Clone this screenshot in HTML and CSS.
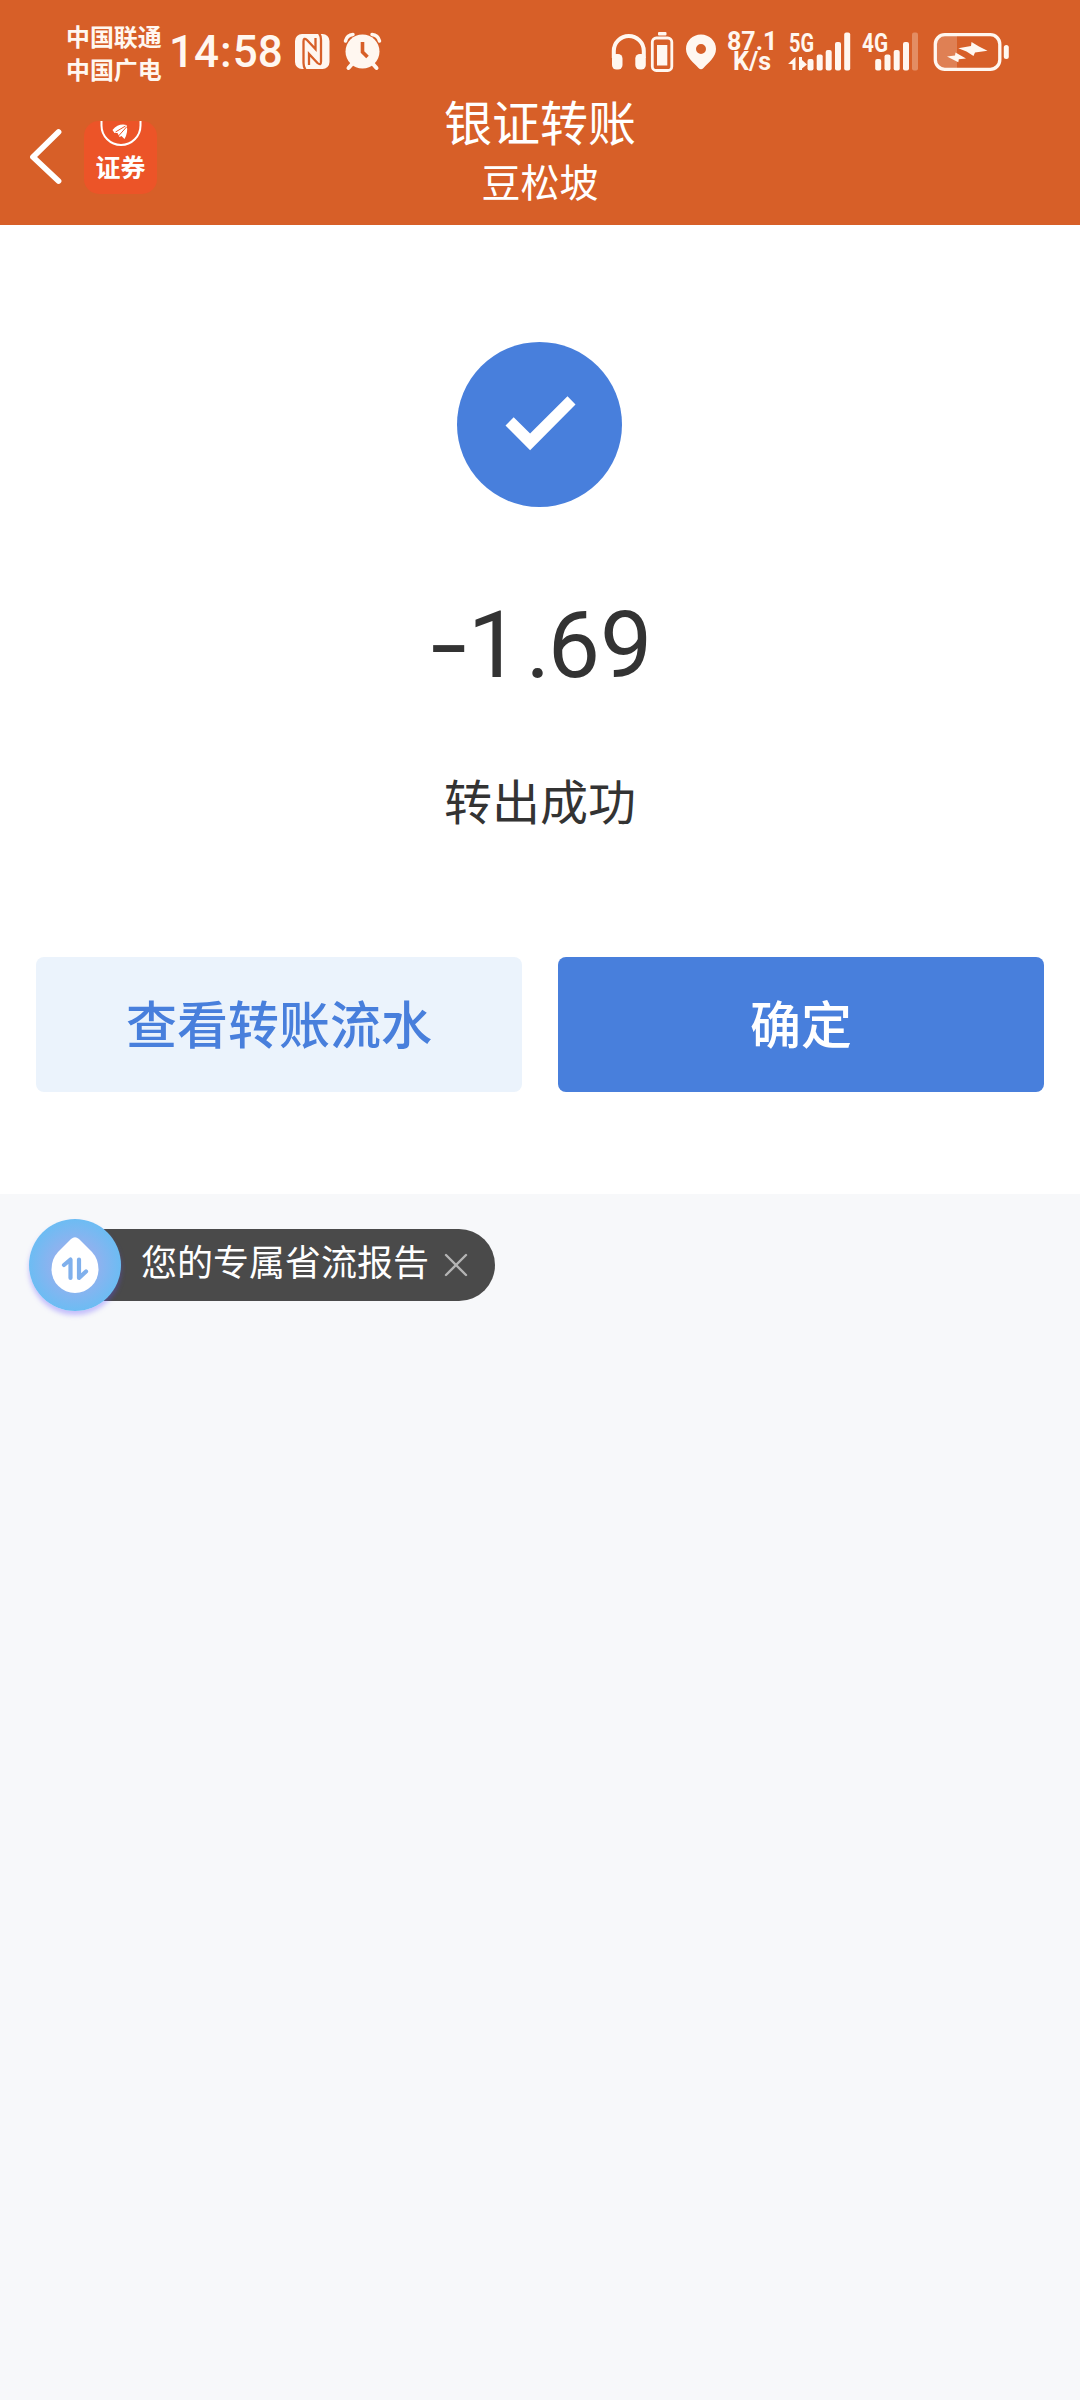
FILE: index.html
```html
<!DOCTYPE html>
<html lang="zh-CN">
<head>
  <meta charset="UTF-8">
  <meta name="viewport" content="width=device-width, initial-scale=1">
  <title>银证转账</title>
  <link rel="stylesheet" href="styles.css">
</head>
<body>
  <header class="header">
    <div class="status-bar">
      <div class="carriers">
        <div>中国联通</div>
        <div>中国广电</div>
      </div>
      <div class="clock">14<span class="colon">:</span>58</div>
      <svg class="nfc" width="35" height="36" viewBox="295 34 35 36">
        <rect x="295" y="34" width="34.500" height="35" rx="7" fill="#fff7f0"/>
        <path d="M305.500 70Q303.500 67 303.500 63V41.500Q303.500 37 307 40L315.500 49V38M319 33Q321 36 321 40V61.500Q321 66 317.500 63L309 54V65" fill="none" stroke="#d75f28" stroke-width="2.300"/>
      </svg>
      <svg class="alarm" width="38" height="38" viewBox="344 33 38 38" fill="none" stroke="#fff7f0">
        <circle cx="362.500" cy="51.500" r="17" fill="#fff7f0" stroke="none"/>
        <path d="M345.500 41Q347 35 353 34.500M372 34.500Q378 35 379.500 41" stroke-width="3.500" stroke-linecap="round"/>
        <path d="M352 64L348.500 68M373 64L376.500 68" stroke-width="4" stroke-linecap="round"/>
        <path d="M362.500 42V52L367.500 57" stroke="#d75f28" stroke-width="3.600"/>
      </svg>

      <div class="status-right">
        <svg width="63" height="42" viewBox="611 31 63 42" fill="#fff7f0">
          <path d="M613.800 58V51A15 15 0 0 1 643.800 51V58" fill="none" stroke="#fff7f0" stroke-width="4"/>
          <rect x="612" y="54" width="10.500" height="15.500" rx="4.500"/>
          <rect x="635.300" y="54" width="10.500" height="15.500" rx="4.500"/>
          <rect x="658" y="32" width="8.500" height="3.500" rx="1"/>
          <rect x="652.300" y="38" width="19.500" height="32.500" rx="4" fill="none" stroke="#fff7f0" stroke-width="2.800"/>
          <rect x="657" y="45" width="10.300" height="20.500"/>
        </svg>
        <svg class="pin" width="31" height="36" viewBox="686 33 31 36">
          <path d="M701 33.500C709.500 33.500 716 40 716 48C716 56 708 62 703.500 67Q701 69.500 698.500 67C694 62 686 56 686 48C686 40 692.500 33.500 701 33.500ZM701 43A5 5 0 1 0 701 53A5 5 0 1 0 701 43Z" fill="#fff7f0" fill-rule="evenodd"/>
        </svg>
        <div class="speed">
          <div>87.1</div>
          <div>K/s</div>
        </div>
        <svg class="signal-5g" width="63" height="40" viewBox="788 31 63 40" fill="#fff7f0">
          <text x="789" y="50.500" textLength="25" lengthAdjust="spacingAndGlyphs">5G</text>
          <path d="M792.500 69V63H788L795.500 56V69ZM799 56H802V59L807 63.500L802 67.500V69H799Z"/>
          <rect x="807.500" y="58" width="6" height="11.500" rx="2"/>
          <rect x="816.700" y="53.500" width="6" height="16" rx="2"/>
          <rect x="825.700" y="49" width="6" height="20.500" rx="2"/>
          <rect x="835" y="41" width="6" height="28.500" rx="2"/>
          <rect x="844.200" y="31.500" width="6" height="38" rx="2"/>
        </svg>
        <svg class="signal-4g" width="57" height="40" viewBox="862 31 57 40" fill="#fff7f0">
          <text x="862" y="50.500" textLength="26" lengthAdjust="spacingAndGlyphs">4G</text>
          <rect x="875.200" y="58" width="6" height="11.500" rx="2"/>
          <rect x="884.500" y="53.500" width="6" height="16" rx="2"/>
          <rect x="893.700" y="49" width="6" height="20.500" rx="2"/>
          <rect x="903" y="41" width="6" height="28.500" rx="2"/>
          <rect x="912" y="31.500" width="6" height="38" rx="2" opacity=".3"/>
        </svg>
        <svg class="battery" width="76" height="38" viewBox="933 31.500 76 38" fill="#fff7f0">
          <path d="M957 34V67H945Q936 67 936 58V43Q936 34 945 34Z" opacity=".22"/>
          <rect x="935.300" y="33.200" width="64.500" height="34.600" rx="9.500" fill="none" stroke="#fff7f0" stroke-width="3.300"/>
          <rect x="1003.800" y="43.500" width="5" height="14" rx="2.500"/>
          <path d="M958.300 46.700L971 44.500L971.500 40.500L979 45L987.500 49.300L975 51L973.500 54.500L966.500 50Z"/>
          <path d="M947 55L955 54L955.500 51L966 57L958.800 57.800L958.300 60.700Z"/>
        </svg>
      </div>
    </div>

    <div class="nav">
      <div class="nav-left">
        <svg width="32" height="56" viewBox="29 129 32 56">
          <path d="M58.500 132L33 157L58.500 181" fill="none" stroke="#fff" stroke-width="5.800" stroke-linecap="round" stroke-linejoin="round"/>
        </svg>
        <div class="app-icon">
          <svg width="42" height="26" viewBox="99.500 121 42 26">
            <path d="M101 121V125.500A19.500 19.500 0 0 0 140 125.500V121" fill="none" stroke="#fff" stroke-width="2"/>
            <path d="M112 130Q118 123 126 125Q128 132 124 139L121 136L119 137L117 133L114 133Z" fill="#fff"/>
            <path d="M115 132L125 126M118 136L126 127" stroke="#ec5428" stroke-width="1"/>
          </svg>
          <span>证券</span>
        </div>
      </div>
      <div class="nav-title">
        <h1>银证转账</h1>
        <p>豆松坡</p>
      </div>
    </div>
  </header>

  <main class="result">
    <svg class="success-icon" width="165" height="165" viewBox="0 0 165 165">
      <circle cx="82.500" cy="82.500" r="82.500" fill="#487fdc"/>
      <path d="M48.500 83.500L56.700 75.200L73.100 91.500L110.500 54.300L118.500 62.500L73.100 108.200Z" fill="#fff"/>
    </svg>
    <div class="amount"><span class="minus">-</span><span class="one">1</span><span class="dot">.</span>69</div>
    <div class="result-text">转出成功</div>
    <div class="actions">
      <button class="btn btn-light">查看转账流水</button>
      <button class="btn btn-primary">确定</button>
    </div>
  </main>

  <!-- traffic report bubble -->
  <div class="report">
    <div class="report-badge">
      <svg width="48" height="58" viewBox="0 0 48 58">
        <path d="M20 2Q24 -1.500 28 2L41 15Q47.500 22 47.500 32.500A23.500 23.500 0 0 1 .5 32.500Q.5 22 7 15Z" fill="#fff"/>
        <path d="M13 28L19.500 22.500V41M28 22.500V41L35 34.500" fill="none" stroke="#80b0ec" stroke-width="4.200" stroke-linecap="round" stroke-linejoin="round"/>
      </svg>
    </div>
    <div class="report-pill">
      <span>您的专属省流报告</span>
      <svg width="22" height="22" viewBox="0 0 22 22">
        <path d="M1 1L21 21M21 1L1 21" stroke="#b4b4b4" stroke-width="2.400" stroke-linecap="round"/>
      </svg>
    </div>
  </div>
</body>
</html>
```
FILE: styles.css
```css
* {
  box-sizing: border-box;
}

body {
  margin: 0;
  min-height: 2400px;
  background: #f7f8fa;
  font-family: Roboto, "Noto Sans CJK SC", sans-serif;
  color: #333;
}

svg {
  display: block;
  flex: none;
  overflow: visible;
}

h1, p {
  margin: 0;
  font-weight: 400;
}

/* header */
.header {
  height: 225px;
  background: #d75f28;
  color: #fff;
}

.status-bar {
  display: flex;
  align-items: center;
  height: 95px;
  padding: 8px 71px 0 66px;
  color: #fff7f0;
}

.carriers {
  width: 97px;
  font-size: 23.9px;
  font-weight: 700;
  line-height: 33px;
  padding-top: 6px;
  white-space: nowrap;
}

.clock {
  width: 132px;
  padding-left: 6px;
  font-size: 44px;
  font-weight: 500;
  line-height: 50px;
  white-space: nowrap;
}

.colon {
  padding: 0 1px;
}

.alarm {
  margin-left: 14px;
}

.status-right {
  display: flex;
  align-items: center;
  margin-left: auto;
}

.status-right text {
  font-size: 25px;
  font-weight: 700;
}

.pin {
  margin-left: 12px;
}

.speed {
  width: 50px;
  margin-left: 10px;
  font-size: 25px;
  font-weight: 700;
  line-height: 20px;
  text-align: center;
}

.signal-5g {
  margin-left: 11px;
}

.signal-4g {
  margin-left: 11px;
}

.battery {
  margin-left: 14px;
}

.nav {
  display: grid;
  grid-template-columns: 200px 1fr 200px;
  height: 130px;
}

.nav-left {
  display: flex;
  align-items: flex-start;
  gap: 23px;
  padding: 26px 0 0 29px;
}

.nav-left > svg {
  margin-top: 8px;
}

.app-icon {
  display: flex;
  flex-direction: column;
  align-items: center;
  width: 73px;
  height: 73px;
  border-radius: 15px;
  background: #ec5428;
  font-size: 25px;
  font-weight: 700;
  line-height: 36px;
}

.app-icon span {
  margin-top: 4px;
}

.nav-title {
  text-align: center;
}

.nav-title h1 {
  font-size: 48px;
  line-height: 60px;
}

.nav-title p {
  font-size: 39px;
  line-height: 58px;
}

/* result */
.result {
  display: flex;
  flex-direction: column;
  align-items: center;
  height: 969px;
  padding: 117px 36px 0;
  background: #fff;
}

.success-icon {
  margin-right: 1px;
}

.amount {
  display: flex;
  height: 110px;
  margin-top: 84px;
  font-size: 93px;
  line-height: 110px;
}

.minus {
  width: 40px;
  padding-left: 2px;
  transform: scaleX(1.4);
  transform-origin: left;
}

.one {
  width: 58px;
}

.dot {
  width: 22px;
}

.result-text {
  margin-top: 68px;
  font-size: 48px;
  line-height: 70px;
}

.actions {
  display: flex;
  gap: 36px;
  width: 100%;
  margin-top: 118px;
}

.btn {
  flex: 1;
  height: 135px;
  padding: 0 0 6px;
  border: none;
  border-radius: 8px;
  font-family: inherit;
  font-size: 51px;
  font-weight: 500;
}

.btn-light {
  background: #ebf3fc;
  color: #487fdc;
}

.btn-primary {
  background: #487fdc;
  color: #fff;
}

/* report bubble */
.report {
  display: flex;
  align-items: center;
  margin: 25px 0 0 29px;
}

.report-badge {
  z-index: 1;
  display: flex;
  justify-content: center;
  width: 92px;
  height: 92px;
  padding-top: 18px;
  border-radius: 50%;
  background: radial-gradient(circle, #8eb2ef 35%, #6dbcf3 70%);
  box-shadow: 0 4px 5px rgba(100, 80, 255, 0.35);
}

.report-pill {
  display: flex;
  align-items: center;
  gap: 16px;
  width: 395px;
  height: 72px;
  margin-left: -21px;
  padding-left: 41px;
  border-radius: 0 36px 36px 0;
  background: #4a4a4a;
  color: #fff;
  font-size: 36px;
  white-space: nowrap;
}

.report-pill span {
  margin-top: -10px;
}
```
